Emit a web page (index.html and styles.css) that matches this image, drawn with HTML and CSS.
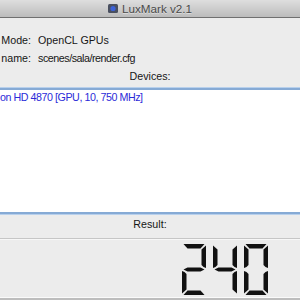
FILE: index.html
```html
<!DOCTYPE html>
<html lang="en">
<head>
  <meta charset="UTF-8">
  <title>LuxMark v2.1</title>
  <link rel="stylesheet" href="styles.css">
</head>
<body>
  <div class="window">
    <div class="titlebar">
      <svg class="app-icon" width="10" height="9" viewBox="0 0 10 9">
        <rect x="0" y="0" width="10" height="9" rx="1.5" fill="#4a5060"/>
        <circle cx="5" cy="4.5" r="2.6" fill="#3c62d8"/>
      </svg>
      <span class="title">LuxMark v2.1</span>
    </div>

    <div class="info">
      <span class="label">Mode:</span>
      <span class="value">OpenCL GPUs</span>
      <span class="label">name:</span>
      <span class="value path">scenes/sala/render.cfg</span>
    </div>

    <div class="caption">Devices:</div>
    <ul class="devices">
      <li>on HD 4870 [GPU, 10, 750 MHz]</li>
    </ul>

    <div class="caption result">Result:</div>
    <div class="lcd">
      <svg width="86" height="51" viewBox="0 0 86 51">
        <defs>
          <polygon id="sa" points="1.5,0 22.5,0 18.5,4.5 5.5,4.5"/>
          <polygon id="sb" points="24,1.5 24,24 21.5,23 19.5,21 19.5,5.5"/>
          <polygon id="sc" points="24,27 24,49.5 19.5,45.5 19.5,30 21.5,28"/>
          <polygon id="sd" points="1.5,51 22.5,51 18.5,46.5 5.5,46.5"/>
          <polygon id="se" points="0,27 0,49.5 4.5,45.5 4.5,30 2.5,28"/>
          <polygon id="sf" points="0,1.5 0,24 2.5,23 4.5,21 4.5,5.5"/>
          <polygon id="sg" points="1.5,25.5 5.5,23.5 18.5,23.5 22.5,25.5 18.5,27.5 5.5,27.5"/>
        </defs>
        <g fill="#111">
          <g>
            <use href="#sa"/><use href="#sb"/><use href="#sg"/><use href="#se"/><use href="#sd"/>
          </g>
          <g transform="translate(31,0)">
            <use href="#sf"/><use href="#sg"/><use href="#sb"/><use href="#sc"/>
          </g>
          <g transform="translate(62,0)">
            <use href="#sa"/><use href="#sb"/><use href="#sc"/><use href="#sd"/><use href="#se"/><use href="#sf"/>
          </g>
        </g>
      </svg>
    </div>
  </div>
</body>
</html>
```

FILE: styles.css
```css
html, body {
  margin: 0;
  height: 300px;
  overflow: hidden;
  background-color: #ececec;
}
body {
  font-family: "Liberation Sans", Arial, sans-serif;
  font-size: 10.7px;
  color: #161616;
}
.window {
  width: 300px;
}
.titlebar {
  height: 17px;
  border-bottom: 1px solid #707070;
  background: linear-gradient(#dedede, #bcbcbc);
  display: flex;
  align-items: center;
  justify-content: center;
  gap: 4px;
}
.app-icon {
  display: block;
}
.title {
  font-size: 11.7px;
  color: #4a4a4a;
  text-shadow: 0 1px 0 rgba(255, 255, 255, 0.45);
}
.info {
  display: grid;
  grid-template-columns: 31px auto;
  column-gap: 7px;
  padding-top: 13px;
  line-height: 18px;
}
.label {
  text-align: right;
}
.path {
  letter-spacing: -0.45px;
}
.caption {
  text-align: center;
  line-height: 18px;
}
.devices {
  list-style: none;
  margin: 3px 0 0;
  padding: 0;
  height: 122px;
  background: #fff;
  border-top: 2px solid #86aad5;
  border-bottom: 2px solid #86aad5;
  box-shadow: 0 -1px 0 #b8d0ec, 0 1px 0 #b8d0ec;
}
.devices li {
  line-height: 14px;
  color: #2b2bd8;
  letter-spacing: -0.45px;
}
.result {
  margin-top: 1px;
  padding-bottom: 5px;
}
.lcd {
  border-top: 1px solid #c6c6c6;
  border-bottom: 2px solid #bdbdbd;
  box-shadow: inset 0 1px 0 #f7f7f7, inset 0 -1px 0 #fafafa;
  padding: 5px 32px 3px 0;
  display: flex;
  justify-content: flex-end;
}
.lcd svg {
  display: block;
}
```
